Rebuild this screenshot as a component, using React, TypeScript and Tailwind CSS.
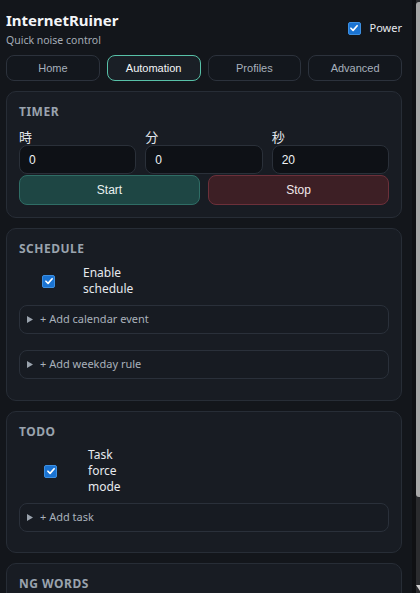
import React from "react";

function Check() {
  return (
    <span className="flex h-[13px] w-[13px] shrink-0 items-center justify-center rounded-[2px] border border-[#3d8fe0] bg-[#1a73d2]">
      <svg viewBox="0 0 12 12" className="h-[10px] w-[10px]">
        <path d="M2.3 6.3 L4.9 8.8 L9.8 3.3" fill="none" stroke="#ffffff" strokeWidth="2" strokeLinecap="round" strokeLinejoin="round" />
      </svg>
    </span>
  );
}

function Details({ text }: { text: string }) {
  return (
    <div className="flex h-[29px] items-center gap-[7px] rounded-[8px] border border-[#2a303a] bg-[#171b22] pl-[7px] text-[11px] text-[#a9b1bb]">
      <svg viewBox="0 0 6 7" className="h-[7px] w-[6px]">
        <polygon points="0,0 6,3.5 0,7" fill="#9aa3ad" />
      </svg>
      <span>{text}</span>
    </div>
  );
}

function Title({ children }: { children: React.ReactNode }) {
  return (
    <h2 className="text-[12px] font-bold uppercase leading-[16px] tracking-[0.5px] text-[#9aa3ae]">{children}</h2>
  );
}

const panel = "rounded-[10px] border border-[#272d36] bg-[#181c23] p-[12px]";

export default function App() {
  const tabs = ["Home", "Automation", "Profiles", "Advanced"];
  const fields = [
    { l: "時", v: "0" },
    { l: "分", v: "0" },
    { l: "秒", v: "20" },
  ];
  return (
    <div className="flex h-[593px] w-[420px] overflow-hidden bg-[#13161b] font-['Noto_Sans',sans-serif]">
      <div className="w-[412px] shrink-0 pl-[6px] pr-[10px] pt-[10px]">
        <header className="flex items-start justify-between">
          <div>
            <h1 className="text-[15px] font-bold leading-[20px] text-[#f3f5f8]">InternetRuiner</h1>
            <p className="mt-[2px] text-[10.5px] leading-[16px] text-[#a4acb6]">Quick noise control</p>
          </div>
          <label className="mt-[10px] flex items-center gap-[9px] text-[11px] leading-[16px] text-[#e6e9ee]">
            <Check />
            Power
          </label>
        </header>

        <nav className="mt-[7px] grid grid-cols-4 gap-[7px] font-['Liberation_Sans',Arial,sans-serif] text-[11px]">
          {tabs.map((t) =>
            t === "Automation" ? (
              <div key={t} className="flex h-[26px] items-center justify-center rounded-[8px] border border-[#58c1a8] bg-[#1a1f26] text-[#f4f6f8]">
                {t}
              </div>
            ) : (
              <div key={t} className="flex h-[26px] items-center justify-center rounded-[8px] border border-[#2c323c] bg-[#13171d] text-[#a7b0bc]">
                {t}
              </div>
            )
          )}
        </nav>

        <section className={`mt-[10px] ${panel}`}>
          <Title>Timer</Title>
          <div className="mt-[9px] grid grid-cols-3 gap-x-[9px]">
            {fields.map((f) => (
              <div key={f.l}>
                <div className="text-[13px] leading-[16px] text-[#e2e6eb] font-['Noto_Sans_CJK_JP',sans-serif]">{f.l}</div>
                <div className="flex h-[29px] items-center rounded-[8px] border border-[#2a3039] bg-[#0e1116] px-[9px] font-['Liberation_Sans',Arial,sans-serif] text-[12px] text-[#f0f2f5]">
                  {f.v}
                </div>
              </div>
            ))}
          </div>
          <div className="mt-[1px] grid grid-cols-2 gap-[8px] font-['Liberation_Sans',Arial,sans-serif] text-[12px]">
            <button className="h-[30px] rounded-[8px] border border-[#2f6d65] bg-[#1e4644] text-[#eaf1f0]">Start</button>
            <button className="h-[30px] rounded-[8px] border border-[#6c303a] bg-[#3d1f25] text-[#f1e8ea]">Stop</button>
          </div>
        </section>

        <section className={`mt-[10px] ${panel}`}>
          <Title>Schedule</Title>
          <label className="mt-[8px] flex items-center gap-[28px] pl-[23px] text-[12px] leading-[16px] text-[#e6e9ee]">
            <Check />
            <span className="w-[56px]">Enable schedule</span>
          </label>
          <div className="mt-[8px]">
            <Details text="+ Add calendar event" />
          </div>
          <div className="mt-[16px] mb-[9px]">
            <Details text="+ Add weekday rule" />
          </div>
        </section>

        <section className={`mt-[10px] ${panel}`}>
          <Title>Todo</Title>
          <label className="mt-[7px] flex items-center gap-[31px] pl-[25px] text-[12px] leading-[16px] text-[#e6e9ee]">
            <Check />
            <span className="w-[36px]">Task force mode</span>
          </label>
          <div className="mt-[8px] mb-[8px]">
            <Details text="+ Add task" />
          </div>
        </section>

        <section className={`mt-[10px] ${panel}`}>
          <Title>NG Words</Title>
          <div className="h-[60px]" />
        </section>
      </div>

      <div className="flex w-[8px] shrink-0">
        <div className="w-[4px] bg-[#0f1013]" />
        <div className="flex w-[4px] flex-col bg-[#2b2c2f]">
          <div className="mt-[2px] h-[495px] rounded-tl-[3px] rounded-bl-[3px] bg-[#a8a8a8]" />
          <div className="flex-1" />
          <svg viewBox="0 0 4 6" className="mb-[2px] h-[6px] w-[4px]">
            <polygon points="0,0 4,0 4,6" fill="#d0d0d0" />
          </svg>
        </div>
      </div>
    </div>
  );
}
